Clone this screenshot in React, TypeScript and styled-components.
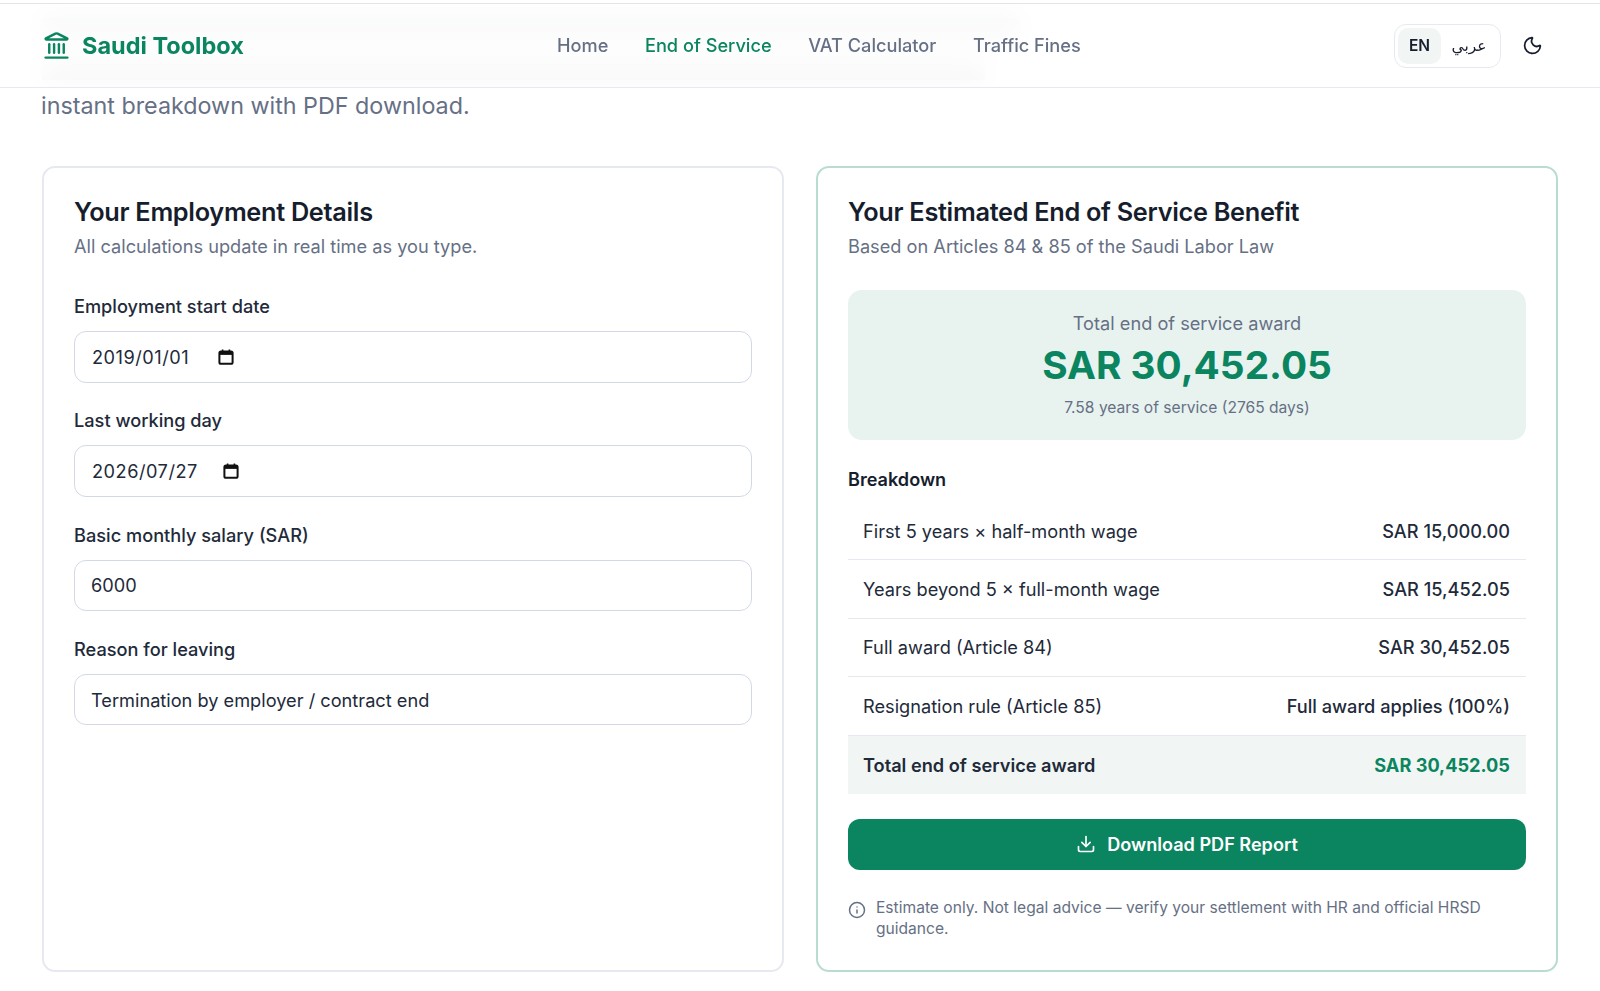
import React from "react";
import styled, { createGlobalStyle } from "styled-components";
import { Landmark, Moon, Download, Info } from "lucide-react";

const COLORS = {
  green: "#0b855f",
  ink: "#161d2d",
  body: "#222a3a",
  muted: "#667085",
  line: "#e6e9ef",
  inputLine: "#d3d9e4",
  mint: "#e8f3ef",
  mintRow: "#f1f6f4",
  mintLine: "#b8dcd0",
};

const GlobalStyle = createGlobalStyle`
  html, body {
    margin: 0;
    background: #fff;
    font-family: Inter, "Liberation Sans", sans-serif;
    color: ${COLORS.ink};
  }
  * { box-sizing: border-box; }
`;

const Page = styled.div`
  position: relative;
  height: 991px;
  overflow: hidden;
  padding: 18px 42px 0;
`;

const Header = styled.header`
  position: absolute;
  top: 3px;
  left: 0;
  right: 0;
  height: 85px;
  padding: 0 42px;
  display: flex;
  align-items: center;
  justify-content: space-between;
  border-top: 1px solid #e2e4e8;
  border-bottom: 1px solid ${COLORS.line};
  background: rgba(255, 255, 255, 0.86);
  backdrop-filter: blur(14px);
`;

const Brand = styled.a`
  display: flex;
  align-items: center;
  gap: 11px;
  font-size: 23.5px;
  font-weight: 700;
  color: ${COLORS.green};
`;

const Nav = styled.nav`
  display: flex;
  gap: 36.5px;
  padding-bottom: 2px;
`;

const NavLink = styled.a<{ $active?: boolean }>`
  font-size: 18.2px;
  font-weight: 500;
  color: ${(p) => (p.$active ? COLORS.green : COLORS.muted)};
`;

const HeaderRight = styled.div`
  display: flex;
  align-items: center;
  gap: 5px;
`;

const LangSwitch = styled.div`
  display: flex;
  width: 107px;
  height: 44px;
  padding: 3px;
  border: 1px solid ${COLORS.line};
  border-radius: 12px;
`;

const LangOption = styled.span<{ $active?: boolean }>`
  display: flex;
  align-items: center;
  justify-content: center;
  flex: ${(p) => (p.$active ? "0 0 43px" : "1")};
  border-radius: 10px;
  font-size: 15.5px;
  font-weight: ${(p) => (p.$active ? 600 : 400)};
  font-family: Inter, "DejaVu Sans", sans-serif;
  background: ${(p) => (p.$active ? COLORS.mintRow : "transparent")};
`;

const ThemeButton = styled.button`
  display: flex;
  align-items: center;
  justify-content: center;
  width: 52px;
  height: 44px;
  padding: 0;
  border: 0;
  background: none;
  color: ${COLORS.ink};
`;

/* the intro lines scrolled under the frosted header: only a smudge is left of them */
const HiddenLine = styled.div<{ $width: number }>`
  width: ${(p) => p.$width}px;
  height: 16px;
  margin-bottom: 30px;
  background: ${COLORS.muted};
  opacity: 0.45;
`;

const Lead = styled.p`
  margin: -22px 0 42px -1px;
  font-size: 23.3px;
  line-height: 36px;
  color: ${COLORS.muted};
  white-space: nowrap;
`;

const Columns = styled.div`
  display: grid;
  grid-template-columns: 1fr 1fr;
  gap: 32px;
`;

const Card = styled.section<{ $accent?: boolean }>`
  display: flex;
  flex-direction: column;
  height: 806px;
  padding: 29px 30px 30px;
  border: 2px solid ${(p) => (p.$accent ? COLORS.mintLine : COLORS.line)};
  border-radius: 13px;
  background: #fff;
`;

const CardTitle = styled.h2`
  margin: 0;
  font-size: 25.3px;
  line-height: 30px;
  font-weight: 600;
  letter-spacing: -0.3px;
  color: ${COLORS.ink};
`;

const CardSub = styled.p`
  margin: 7px 0 0;
  font-size: 18.2px;
  line-height: 25px;
  color: ${COLORS.muted};
`;

const Form = styled.div`
  display: flex;
  flex-direction: column;
  gap: 25.8px;
  margin-top: 35px;
`;

const Field = styled.div`
  display: flex;
  flex-direction: column;
  gap: 13px;
`;

const Label = styled.label`
  font-size: 18.2px;
  line-height: 24px;
  font-weight: 500;
  color: ${COLORS.body};
`;

const InputBox = styled.div<{ $date?: boolean }>`
  display: flex;
  align-items: center;
  height: 51.5px;
  padding: 0 ${(p) => (p.$date ? "17px" : "16px")};
  border: 1.5px solid ${COLORS.inputLine};
  border-radius: 12px;
  font-size: 18.2px;
  color: ${COLORS.body};
`;

const DateValue = styled.span<{ $width: number }>`
  width: ${(p) => p.$width}px;
  letter-spacing: 0.5px;
`;

const Summary = styled.div`
  display: flex;
  flex-direction: column;
  align-items: center;
  height: 150px;
  margin-top: 31px;
  padding-top: 20px;
  border-radius: 14px;
  background: ${COLORS.mint};
`;

const SummaryLabel = styled.div`
  font-size: 18.2px;
  line-height: 26px;
  color: ${COLORS.muted};
`;

const SummaryAmount = styled.div`
  margin-top: 5px;
  font-size: 38.8px;
  line-height: 48px;
  font-weight: 700;
  color: ${COLORS.green};
`;

const SummaryNote = styled.div`
  margin-top: 7px;
  font-size: 15.6px;
  line-height: 24px;
  color: ${COLORS.muted};
`;

const SectionHeading = styled.h3`
  margin: 27px 0 11px;
  font-size: 18.1px;
  line-height: 24px;
  font-weight: 600;
  color: ${COLORS.ink};
`;

const Rows = styled.div`
  display: flex;
  flex-direction: column;
`;

const Row = styled.div<{ $total?: boolean }>`
  display: flex;
  align-items: center;
  justify-content: space-between;
  height: 58.4px;
  padding: 0 16px 0 15px;
  font-size: 18.2px;
  font-weight: ${(p) => (p.$total ? 600 : 400)};
  color: ${COLORS.body};
  background: ${(p) => (p.$total ? COLORS.mintRow : "transparent")};
  border-bottom: ${(p) => (p.$total ? "0" : `1px solid ${COLORS.line}`)};
`;

const RowValue = styled.span<{ $total?: boolean }>`
  font-weight: ${(p) => (p.$total ? 700 : 500)};
  color: ${(p) => (p.$total ? COLORS.green : COLORS.body)};
`;

const DownloadButton = styled.button`
  display: flex;
  align-items: center;
  justify-content: center;
  gap: 11px;
  height: 51px;
  margin-top: 25px;
  border: 0;
  border-radius: 12px;
  background: ${COLORS.green};
  color: #fff;
  font-family: inherit;
  font-size: 18.1px;
  font-weight: 600;
`;

const Disclaimer = styled.div`
  display: flex;
  gap: 10px;
  margin-top: 27px;
  font-size: 15.6px;
  line-height: 21px;
  color: ${COLORS.muted};

  svg {
    flex: none;
    margin-top: 4px;
  }
`;

const CalendarGlyph = () => (
  <svg width="16" height="16" viewBox="0 0 16 16" fill="none">
    <rect x="1.4" y="2.4" width="13.2" height="12.4" rx="1.6" stroke="#111" strokeWidth="2" />
    <path d="M1.5 4.4h13" stroke="#111" strokeWidth="3" />
    <path d="M4.6 .6v2.6M11.4 .6v2.6" stroke="#111" strokeWidth="1.6" />
  </svg>
);

const rows = [
  ["First 5 years × half-month wage", "SAR 15,000.00"],
  ["Years beyond 5 × full-month wage", "SAR 15,452.05"],
  ["Full award (Article 84)", "SAR 30,452.05"],
  ["Resignation rule (Article 85)", "Full award applies (100%)"],
];

export default function App() {
  return (
    <Page>
      <GlobalStyle />
      <HiddenLine $width={978} />
      <HiddenLine $width={943} />
      <Lead>instant breakdown with PDF download.</Lead>
      <Columns>
        <Card>
          <CardTitle>Your Employment Details</CardTitle>
          <CardSub>All calculations update in real time as you type.</CardSub>
          <Form>
            <Field>
              <Label>Employment start date</Label>
              <InputBox $date>
                <DateValue $width={126}>2019/01/01</DateValue>
                <CalendarGlyph />
              </InputBox>
            </Field>
            <Field>
              <Label>Last working day</Label>
              <InputBox $date>
                <DateValue $width={131}>2026/07/27</DateValue>
                <CalendarGlyph />
              </InputBox>
            </Field>
            <Field>
              <Label>Basic monthly salary (SAR)</Label>
              <InputBox>6000</InputBox>
            </Field>
            <Field>
              <Label>Reason for leaving</Label>
              <InputBox>Termination by employer / contract end</InputBox>
            </Field>
          </Form>
        </Card>
        <Card $accent>
          <CardTitle>Your Estimated End of Service Benefit</CardTitle>
          <CardSub>Based on Articles 84 &amp; 85 of the Saudi Labor Law</CardSub>
          <Summary>
            <SummaryLabel>Total end of service award</SummaryLabel>
            <SummaryAmount>SAR 30,452.05</SummaryAmount>
            <SummaryNote>7.58 years of service (2765 days)</SummaryNote>
          </Summary>
          <SectionHeading>Breakdown</SectionHeading>
          <Rows>
            {rows.map(([name, value]) => (
              <Row key={name}>
                <span>{name}</span>
                <RowValue>{value}</RowValue>
              </Row>
            ))}
            <Row $total>
              <span>Total end of service award</span>
              <RowValue $total>SAR 30,452.05</RowValue>
            </Row>
          </Rows>
          <DownloadButton>
            <Download size={20} />
            Download PDF Report
          </DownloadButton>
          <Disclaimer>
            <Info size={18} />
            <span>Estimate only. Not legal advice — verify your settlement with HR and official HRSD guidance.</span>
          </Disclaimer>
        </Card>
      </Columns>
      <Header>
        <Brand>
          <Landmark size={29} strokeWidth={2} />
          Saudi Toolbox
        </Brand>
        <Nav>
          <NavLink>Home</NavLink>
          <NavLink $active>End of Service</NavLink>
          <NavLink>VAT Calculator</NavLink>
          <NavLink>Traffic Fines</NavLink>
        </Nav>
        <HeaderRight>
          <LangSwitch>
            <LangOption $active>EN</LangOption>
            <LangOption>عربي</LangOption>
          </LangSwitch>
          <ThemeButton>
            <Moon size={21} />
          </ThemeButton>
        </HeaderRight>
      </Header>
    </Page>
  );
}
